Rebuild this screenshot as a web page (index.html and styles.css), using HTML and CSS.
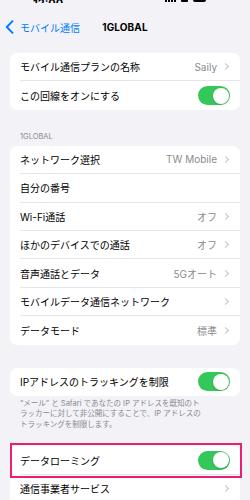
FILE: index.html
```html
<!DOCTYPE html>
<html lang="ja">
<head>
<meta charset="utf-8">
<link rel="stylesheet" href="styles.css">
</head>
<body>
<div class="status">
  <span class="time">12:00</span>
  <span class="sicons">
    <span class="bars"><i></i><i></i><i></i><i></i></span>
    <span class="wifi"></span>
    <span class="battery"></span>
  </span>
</div>
<div class="nav">
  <div class="back">
    <svg class="chev-back" width="9" height="14" viewBox="0 0 9 14"><path d="M7.5 1.2 L1.8 7 L7.5 12.8" fill="none" stroke="#007aff" stroke-width="1.9" stroke-linecap="round" stroke-linejoin="round"/></svg>
    <span>モバイル通信</span>
  </div>
  <div class="title">1GLOBAL</div>
</div>

<div class="card">
  <div class="row"><div class="inner"><span class="label">モバイル通信プランの名称</span><span class="value">Saily</span><span class="chev"></span></div></div>
  <div class="row"><div class="inner last"><span class="label">この回線をオンにする</span><span class="toggle"></span></div></div>
</div>

<div class="section">1GLOBAL</div>
<div class="card">
  <div class="row"><div class="inner"><span class="label">ネットワーク選択</span><span class="value">TW Mobile</span><span class="chev"></span></div></div>
  <div class="row"><div class="inner"><span class="label">自分の番号</span></div></div>
  <div class="row"><div class="inner"><span class="label">Wi-Fi通話</span><span class="value">オフ</span><span class="chev"></span></div></div>
  <div class="row"><div class="inner"><span class="label">ほかのデバイスでの通話</span><span class="value">オフ</span><span class="chev"></span></div></div>
  <div class="row"><div class="inner"><span class="label">音声通話とデータ</span><span class="value">5Gオート</span><span class="chev"></span></div></div>
  <div class="row"><div class="inner"><span class="label">モバイルデータ通信ネットワーク</span><span class="chev"></span></div></div>
  <div class="row"><div class="inner last"><span class="label">データモード</span><span class="value">標準</span><span class="chev"></span></div></div>
</div>

<div class="card card-ip">
  <div class="row"><div class="inner last"><span class="label">IPアドレスのトラッキングを制限</span><span class="toggle"></span></div></div>
</div>
<p class="footnote">“メール” と Safari であなたの IP アドレスを既知のト<br>ラッカーに対して非公開にすることで、IP アドレスの<br>トラッキングを制限します。</p>

<div class="card card-roam">
  <div class="row"><div class="inner"><span class="label">データローミング</span><span class="toggle"></span></div></div>
  <div class="row"><div class="inner last"><span class="label">通信事業者サービス</span><span class="chev"></span></div></div>
  <div class="highlight"></div>
</div>
</body>
</html>
```
FILE: styles.css
```css
html, body {
  margin: 0;
  padding: 0;
  background: #f2f2f7;
}
body {
  width: 250px;
  height: 500px;
  overflow: hidden;
  font-family: Inter, "Noto Sans CJK JP", sans-serif;
  color: #000;
}
.status {
  height: 3px;
  overflow: hidden;
  display: flex;
  justify-content: space-between;
  align-items: flex-end;
  padding: 0 44px 0 33px;
}
.time {
  font-size: 11px;
  font-weight: 700;
  line-height: 11px;
  height: 11px;
  margin-bottom: -6px;
}
.sicons {
  display: flex;
  align-items: flex-end;
  gap: 5px;
  margin-bottom: 1px;
}
.bars { display: flex; gap: 1px; align-items: flex-end; }
.bars i { display: block; width: 2px; height: 8px; background: #000; }
.wifi { width: 7px; height: 6px; background: #000; border-radius: 1px; }
.battery { width: 13px; height: 6px; background: #000; border-radius: 2px; }

.nav {
  position: relative;
  height: 30px;
  margin-top: 9px;
  margin-bottom: 11px;
  display: flex;
  align-items: center;
  justify-content: center;
}
.back {
  position: absolute;
  left: 5px;
  top: 0;
  height: 30px;
  display: flex;
  align-items: center;
  gap: 6px;
  color: #007aff;
  font-size: 10px;
}
.chev-back { display: block; }
.title {
  font-size: 10px;
  font-weight: 700;
  letter-spacing: 0.1px;
}

.card {
  position: relative;
  margin: 0 10px;
  background: #fff;
  border-radius: 7px;
}
.row {
  padding-left: 10px;
}
.inner {
  height: 28.4px;
  box-sizing: border-box;
  border-bottom: 1px solid #e6e6ea;
  display: flex;
  align-items: center;
  padding-right: 10px;
  font-size: 10px;
}
.inner.last { border-bottom: none; }
.label { flex: 1; white-space: nowrap; }
.value { color: #8a8a8e; margin-right: 6px; }
.chev {
  width: 4px;
  height: 4px;
  border-top: 1.2px solid #c4c4c7;
  border-right: 1.2px solid #c4c4c7;
  transform: rotate(45deg);
  margin-right: 2px;
}
.toggle {
  position: relative;
  width: 32px;
  height: 19px;
  border-radius: 10px;
  background: #34c759;
}
.toggle::after {
  content: "";
  position: absolute;
  right: 1.5px;
  top: 1.5px;
  width: 16px;
  height: 16px;
  border-radius: 50%;
  background: #fff;
  box-shadow: 0 1px 2px rgba(0,0,0,0.15);
}
.section {
  margin: 22px 20px 4px;
  font-size: 7.5px;
  line-height: 10px;
  color: #8a8a8e;
}
.card-ip { margin-top: 23px; }
.footnote {
  margin: 3px 20px 0;
  font-size: 7.5px;
  line-height: 10.5px;
  color: #8a8a8e;
  white-space: nowrap;
}
.card-roam { margin-top: 16px; }
.highlight {
  position: absolute;
  left: 0;
  top: -3px;
  width: 232px;
  height: 35px;
  box-sizing: border-box;
  border: 2px solid #ec1e73;
}
```
